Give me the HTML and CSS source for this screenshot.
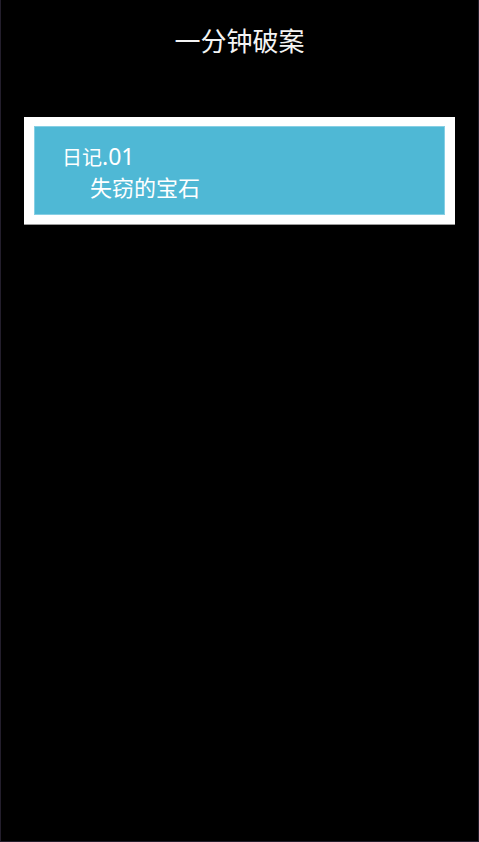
FILE: index.html
```html
<!DOCTYPE html>
<html lang="zh">
<head>
<meta charset="utf-8">
<title>一分钟破案</title>
<link rel="stylesheet" href="styles.css">
</head>
<body>
<div class="screen">
  <header class="title">一分钟破案</header>
  <div class="card">
    <div class="card-inner">
      <div class="card-num">日记<span class="num">.01</span></div>
      <div class="card-name">失窃的宝石</div>
    </div>
  </div>
</div>
</body>
</html>
```
FILE: styles.css
```css
html, body {
  margin: 0;
  padding: 0;
  background: #000;
}
body {
  font-family: "Noto Sans", "Noto Sans CJK SC", sans-serif;
  color: #fff;
}
.screen {
  box-sizing: border-box;
  width: 479px;
  height: 842px;
  border-left: 1px solid #231e2c;
  border-right: 1px solid #231e2c;
  border-bottom: 1px solid #231e2c;
  display: flex;
  flex-direction: column;
}
.title {
  padding-top: 25px;
  font-size: 26px;
  line-height: 32px;
  text-align: center;
  color: #f4f4f4;
}
.card {
  margin: 60px 23px 0 23px;
  background: #fff;
  padding: 9px 10px;
  box-shadow: 0 1px 0 #9a9a9a;
}
.card-inner {
  background: #4fb8d5;
  border: 1px solid #86cfe4;
  padding: 16px 27px 11px 27px;
}
.card-num {
  font-size: 20px;
  line-height: 30px;
  height: 30px;
  color: #fff;
}
.num {
  font-size: 23px;
  line-height: 20px;
}
.card-name {
  font-size: 22px;
  line-height: 29px;
  padding: 0 0 1px 28px;
  color: #fff;
}
```
